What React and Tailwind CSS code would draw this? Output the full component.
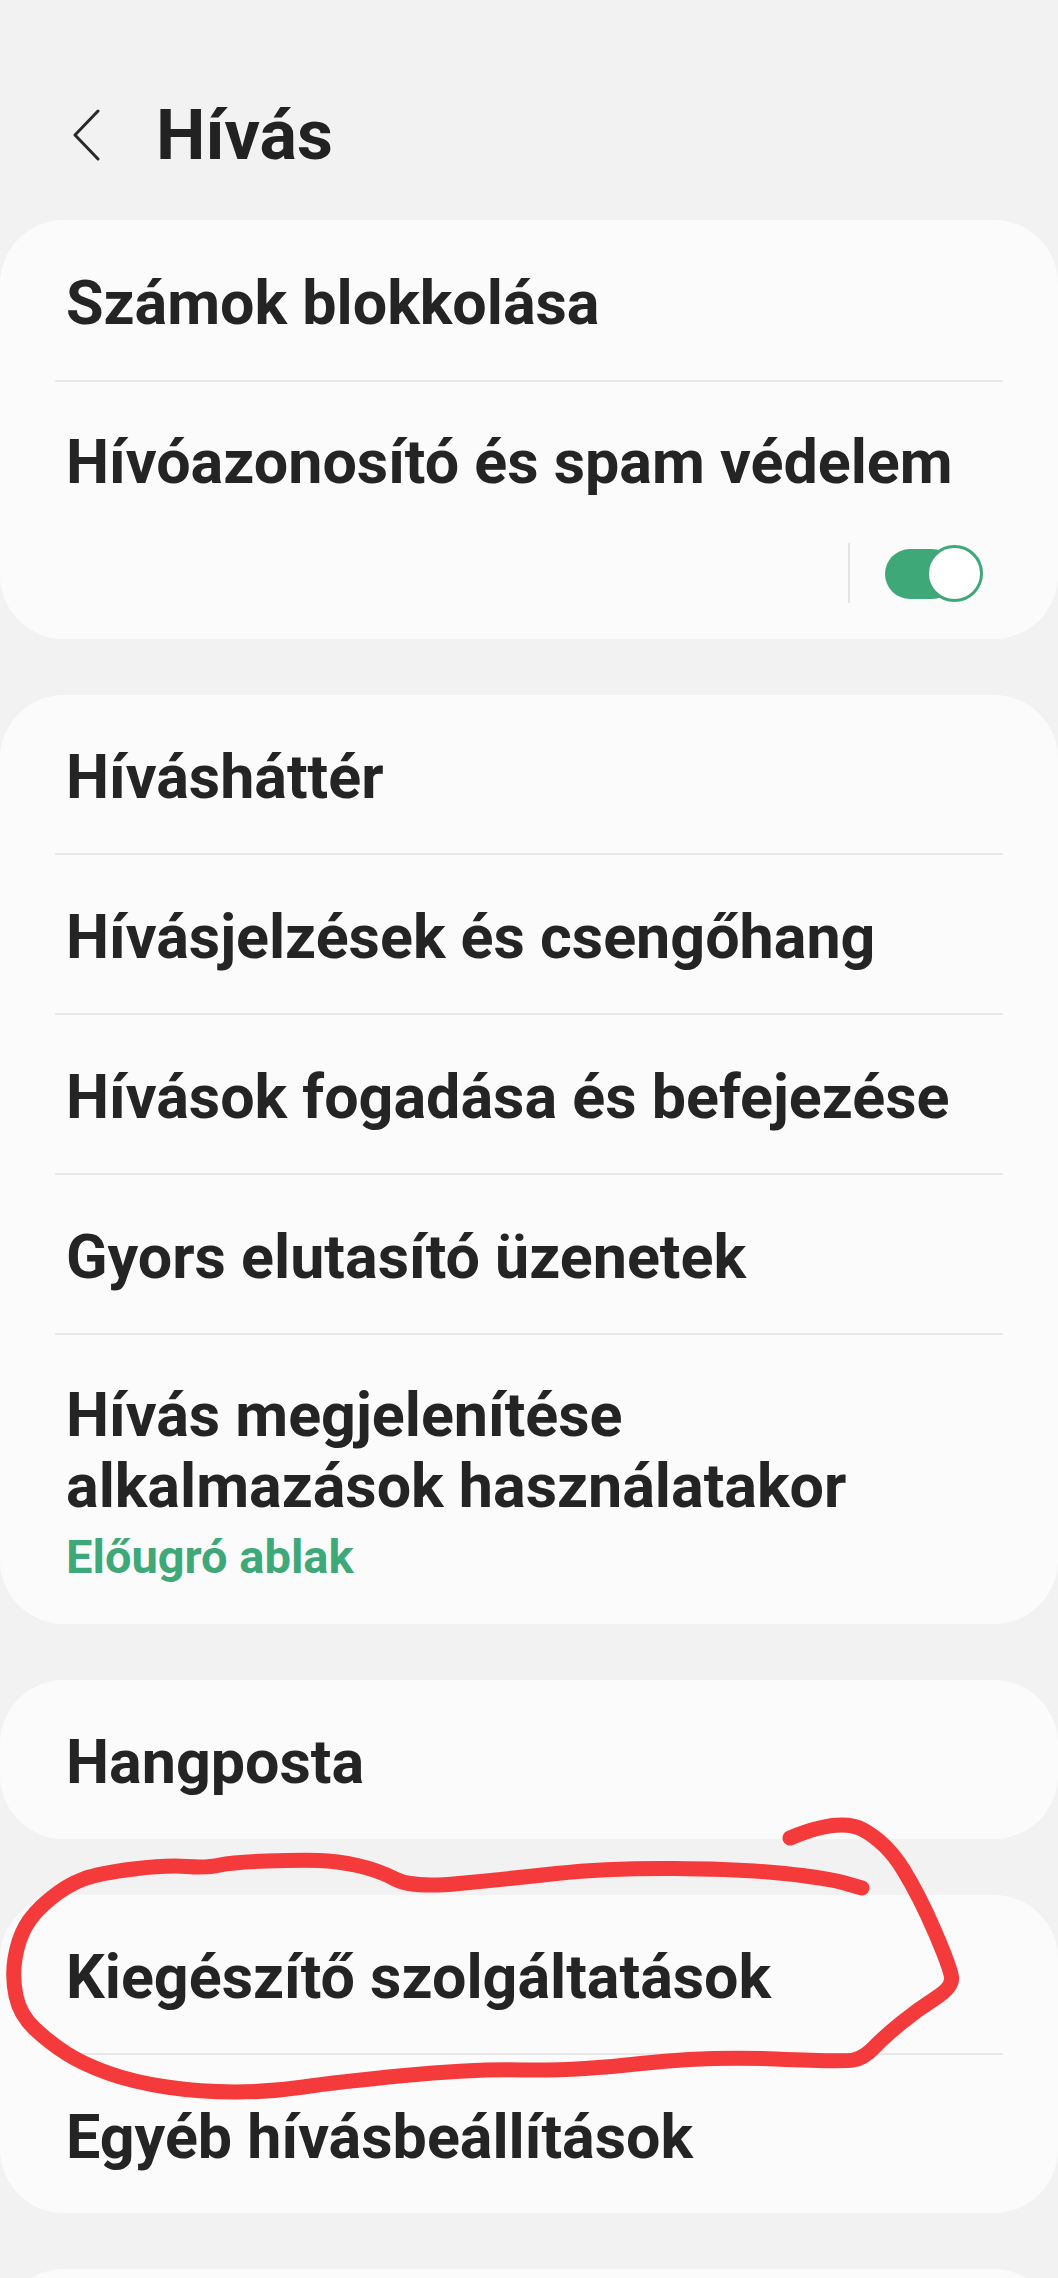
import React from 'react';

// kézzel rajzolt piros karika pontjai (oldal koordinátákban)
const loop = [
  [790, 1838], [840, 1817], [887, 1843], [920, 1897], [950, 1967], [953, 1987],
  [917, 2010], [884, 2037], [864, 2058], [843, 2062], [708, 2056], [574, 2071],
  [472, 2069], [337, 2082], [270, 2092], [200, 2092], [133, 2082], [83, 2064],
  [50, 2043], [20, 2015], [12, 1977], [18, 1940], [33, 1913], [67, 1885],
  [100, 1873], [167, 1865], [207, 1868], [233, 1862], [300, 1860], [337, 1861],
  [378, 1870], [412, 1888], [506, 1879], [607, 1868], [742, 1869], [827, 1878],
  [862, 1888],
];

const smoothPath = (pts) => {
  let d = `M${pts[0][0]} ${pts[0][1]}`;
  for (let i = 1; i < pts.length - 1; i++) {
    const mx = (pts[i][0] + pts[i + 1][0]) / 2;
    const my = (pts[i][1] + pts[i + 1][1]) / 2;
    d += ` Q${pts[i][0]} ${pts[i][1]} ${mx} ${my}`;
  }
  const last = pts[pts.length - 1];
  d += ` L${last[0]} ${last[1]}`;
  return d;
};

const Divider = () => <div className="mx-[55px] h-[2px] bg-[#e9e9e9]" />;

const Row = ({ title, height = 'h-[158px]' }) => (
  <div className={`${height} flex items-center pl-[66px] pr-[55px] pt-[6px]`}>
    <span className="text-[61px] leading-[71px] font-bold text-[#242424]">{title}</span>
  </div>
);

const Card = ({ children }) => (
  <div className="bg-[#fbfbfb] rounded-[64px] overflow-hidden">{children}</div>
);

const Toggle = () => (
  <div className="relative w-[98px] h-[57px]">
    <div className="absolute left-0 top-[4px] w-[72px] h-[50px] rounded-full bg-[#3ea878]" />
    <div className="absolute right-0 top-0 w-[57px] h-[57px] rounded-full border-[3px] border-[#3ea878] bg-white" />
  </div>
);

const App = () => {
  return (
    <div className="relative w-full h-[2278px] overflow-hidden bg-[#f2f2f2] font-[Roboto,sans-serif] text-[#242424]">
      {/* fejléc */}
      <div className="h-[220px] pt-[85px]">
        <div className="flex items-center h-[100px] pl-[72px]">
          <svg width="30" height="52" viewBox="0 0 30 52" fill="none">
            <path d="M26 2 L3 26 L26 50" stroke="#2a2a2a" strokeWidth="3" strokeLinecap="round" strokeLinejoin="round" />
          </svg>
          <h1 className="ml-[54px] text-[70px] leading-none font-bold text-[#222]">Hívás</h1>
        </div>
      </div>

      <div className="flex flex-col gap-[56px]">
        <Card>
          <Row title="Számok blokkolása" height="h-[160px]" />
          <Divider />
          <div className="pl-[66px] pt-[45px] pb-[36px]">
            <div className="text-[61px] leading-[71px] font-bold">Hívóazonosító és spam védelem</div>
            <div className="mt-[45px] flex items-center justify-end pr-[75px] h-[60px]">
              <div className="w-[2px] h-[60px] bg-[#e3e3e3] mr-[35px]" />
              <Toggle />
            </div>
          </div>
        </Card>

        <Card>
          <Row title="Hívásháttér" />
          <Divider />
          <Row title="Hívásjelzések és csengőhang" />
          <Divider />
          <Row title="Hívások fogadása és befejezése" />
          <Divider />
          <Row title="Gyors elutasító üzenetek" />
          <Divider />
          <div className="pl-[66px] pt-[45px] pb-[39px]">
            <div className="text-[61px] leading-[71px] font-bold">
              Hívás megjelenítése
              <br />
              alkalmazások használatakor
            </div>
            <div className="mt-[7px] text-[47px] leading-[56px] font-bold text-[#3ea878]">Előugró ablak</div>
          </div>
        </Card>

        <Card>
          <Row title="Hangposta" height="h-[159px]" />
        </Card>

        <Card>
          <Row title="Kiegészítő szolgáltatások" />
          <Divider />
          <Row title="Egyéb hívásbeállítások" />
        </Card>

        <Card>
          <div className="h-[160px]" />
        </Card>
      </div>

      {/* piros jelölés */}
      <svg className="absolute inset-0 pointer-events-none" width="1058" height="2278" viewBox="0 0 1058 2278" fill="none">
        <path d={smoothPath(loop)} stroke="#f43a3a" strokeWidth="15" strokeLinecap="round" strokeLinejoin="round" />
      </svg>
    </div>
  );
};

export default App;
